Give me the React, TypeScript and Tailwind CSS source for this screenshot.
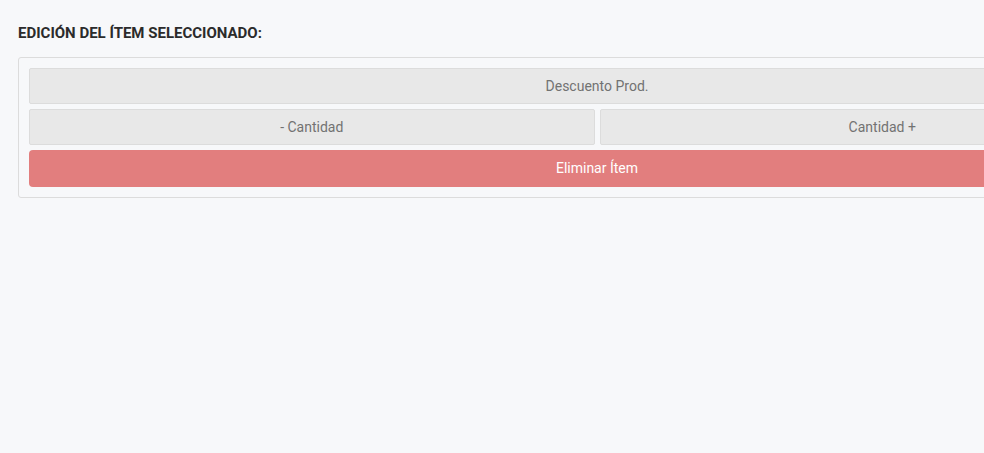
const btnClass =
  'h-9 rounded-[2px] border border-[#dcdcdc] bg-[#e8e8e8] text-[14px] text-[#727272] hover:bg-[#dedede]'

export default function App() {
  return (
    <div className="min-h-[453px] w-full overflow-hidden bg-[#f7f8fa] font-['Roboto',sans-serif]">
      <div className="w-[1176px] pl-[18px] pt-[24px]">
        <h2 className="text-[15px] font-bold uppercase leading-[18px] text-[#2b2b2b]">
          Edición del ítem seleccionado:
        </h2>
        <div className="mt-[15px] flex flex-col gap-[5px] rounded-[3px] border border-[#dcdcdc] bg-[#f7f8fa] p-[10px]">
          <button type="button" className={btnClass}>
            Descuento Prod.
          </button>
          <div className="grid grid-cols-2 gap-[5px]">
            <button type="button" className={btnClass}>
              - Cantidad
            </button>
            <button type="button" className={btnClass}>
              Cantidad +
            </button>
          </div>
          <button
            type="button"
            className="h-[37px] rounded-[4px] bg-[#e27e7e] text-[14px] text-white hover:bg-[#d96f6f]"
          >
            Eliminar Ítem
          </button>
        </div>
      </div>
    </div>
  )
}
